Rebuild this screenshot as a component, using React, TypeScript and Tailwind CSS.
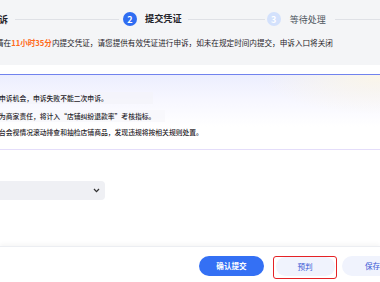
import React from "react";

const font = { fontFamily: '"Noto Sans CJK SC", "Noto Sans", sans-serif' };

export default function App() {
  return (
    <div
      className="relative w-[380px] h-[282px] overflow-hidden bg-white text-[#1f2329]"
      style={font}
    >
      {/* top gray section */}
      <div className="h-[65px] bg-[#f4f5f7] overflow-hidden">
        <div className="flex items-center h-[38px]">
          <span className="shrink-0 ml-[-1px] w-[9px] text-[9px] font-bold leading-none whitespace-nowrap">诉</span>
          <div className="shrink-0 ml-[7px] w-[104px] h-px bg-[#dfe1e6]" />
          <div className="shrink-0 ml-[4px] w-[14px] h-[14px] rounded-full bg-[#2f6df2] flex items-center justify-center text-white text-[9px] font-bold leading-none">
            2
          </div>
          <span className="shrink-0 ml-[8px] text-[9.2px] font-bold leading-none whitespace-nowrap">提交凭证</span>
          <div className="shrink-0 ml-[6px] w-[77px] h-px bg-[#dfe1e6]" />
          <div className="shrink-0 ml-[2px] w-[14px] h-[14px] rounded-full bg-[#d3e1fc] flex items-center justify-center text-white text-[9px] font-bold leading-none">
            3
          </div>
          <span className="shrink-0 ml-[9px] text-[9px] text-[#4e5560] leading-none whitespace-nowrap">等待处理</span>
          <div className="ml-[9px] flex-1 h-px bg-[#dfe1e6]" />
        </div>
        <div className="ml-[-4px] text-[7.6px] leading-[9px] whitespace-nowrap text-[#1f2329]">
          请在<span className="text-[#ff6a1a] font-bold">11小时35分</span>内提交凭证，请您提供有效凭证进行申诉，如未在规定时间内提交，申诉入口将关闭
        </div>
      </div>

      {/* notice card */}
      <div className="mt-[9px] h-[76px] border-t border-b border-t-[#7183ee] border-b-[#e4ddfa] bg-[linear-gradient(180deg,#eceefe_0%,#f6f6ff_30%,#ffffff_70%)] relative overflow-hidden">
        <div className="absolute right-0 top-0 w-[120px] h-[40px] bg-[radial-gradient(ellipse_at_top_right,#fbf6e8_0%,rgba(255,255,255,0)_70%)]" />
        <div className="relative pt-[16px] flex flex-col text-[6.8px] font-medium text-[#1f2329] whitespace-nowrap">
          <div className="h-[14px] flex items-center">
            <span className="ml-[-1px] pr-[45px] h-[12px] flex items-center bg-[#f4f4fa]/70">申诉机会，申诉失败不能二次申诉。</span>
          </div>
          <div className="mt-[4px] h-[14px] flex items-center">
            <span className="ml-[-1px] pr-[10px] h-[12px] flex items-center bg-[#f7f7fb]/70">为商家责任，将计入“店铺纠纷退款率”考核指标。</span>
          </div>
          <div className="mt-[2px] h-[14px] flex items-center">
            <span className="ml-[-1px] h-[12px] flex items-center">台会视情况滚动排查和抽检店铺商品，发现违规将按相关规则处置。</span>
          </div>
        </div>
      </div>

      {/* select */}
      <div className="mt-[31px] w-[105px] h-[19px] rounded-r-[4px] bg-[#eff0f4] flex items-center justify-end pr-[5px]">
        <svg width="7" height="5" viewBox="0 0 7 5">
          <path d="M1 1 L3.5 3.6 L6 1" fill="none" stroke="#333" strokeWidth="1.3" />
        </svg>
      </div>

      {/* footer */}
      <div className="absolute left-0 right-0 bottom-0 h-[36px] bg-white border-t border-[#eceef2] shadow-[0_-2px_4px_rgba(0,0,0,0.04)] flex items-start pt-[9px]">
        <div className="shrink-0 ml-[199px] w-[65px] h-[20px] rounded-full bg-[#3470f4] text-white text-[7.6px] font-bold flex items-center justify-center">
          确认提交
        </div>
        <div className="shrink-0 ml-[9px] w-[64px] h-[23px] rounded-[3px] border-[1.5px] border-[#e52226] flex items-start justify-center">
          <div className="w-[59px] h-[19px] rounded-full bg-[#f0f3fd] text-[#3b5bd6] text-[7.6px] flex items-center justify-center">
            预判
          </div>
        </div>
        <div className="shrink-0 ml-[5px] w-[60px] h-[20px] rounded-l-full bg-[#f0f3fd] text-[#3b5bd6] text-[7.6px] flex items-center pl-[23px] whitespace-nowrap">
          保存
        </div>
      </div>
    </div>
  );
}
